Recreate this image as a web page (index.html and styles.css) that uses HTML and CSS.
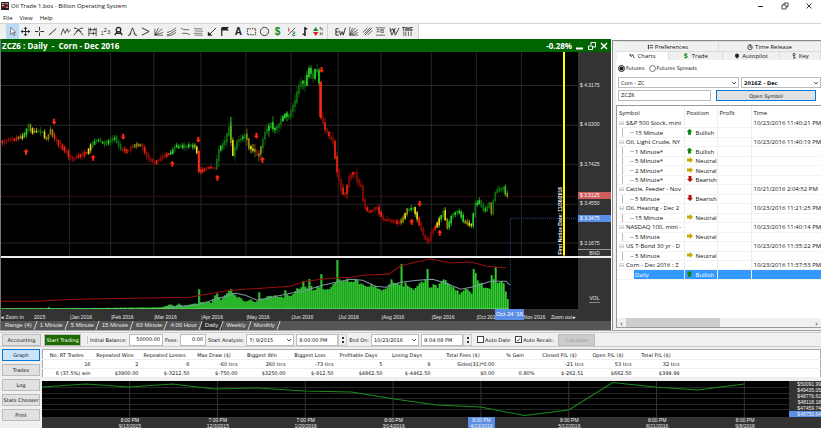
FILE: index.html
```html
<!DOCTYPE html>
<html lang="en">
<head>
    <meta charset="UTF-8">
    <meta name="viewport" content="width=device-width, initial-scale=1.0">
    <title>Oil Trade 1.bos - Billion Operating System</title>
    <link rel="stylesheet" href="styles.css">
</head>
<body>
    <header class="titlebar">
        <svg class="app-icon" viewBox="0 0 9 9"><rect width="9" height="9" rx="1" fill="#2a1414"/><path d="M1 2h3M1 4h2M5 2h3M6 6h2" stroke="#eee"/><path d="M1 7l3-3 1 2 3-3" stroke="#e33" fill="none"/></svg>
        <span class="title">Oil Trade 1.bos - Billion Operating System</span>
        <div class="window-buttons">
            <button aria-label="Minimize"><svg viewBox="0 0 8 8"><path d="M1 4.500h5"/></svg></button>
            <button aria-label="Restore"><svg viewBox="0 0 8 8"><path d="M1 3h4v4H1zM3 3V1h4v4H5" stroke-width=".8"/></svg></button>
            <button aria-label="Close"><svg viewBox="0 0 8 8"><path d="M1.500 1.500l5 5M6.500 1.500l-5 5" stroke-width=".9"/></svg></button>
        </div>
    </header>

    <nav class="menubar">
        <button>File</button>
        <button>View</button>
        <button>Help</button>
    </nav>

    <div class="toolbar">
        <div class="tools tools-draw">
            <button class="active" aria-label="Select"><svg viewBox="0 0 12 12"><path d="M4 1.500v8l2-2 1.500 3 1-.5-1.500-3h2.500z" fill="#fff" stroke="#555" stroke-width=".8"/></svg></button>
            <button aria-label="Move"><svg viewBox="0 0 12 12"><path d="M6 2v8M2 6h8"/><path d="M6 .8l2 2.200H4zM6 11.200l2-2.200H4zM.8 6l2.200-2v4zM11.200 6L9 4v4z" fill="#222" stroke="none"/></svg></button>
            <button aria-label="Crosshair"><svg viewBox="0 0 12 12"><path d="M6 1v4M6 7v4M1 6h4M7 6h4"/></svg></button>
            <button aria-label="Line"><svg viewBox="0 0 12 12"><path d="M2 10l8-7"/></svg></button>
            <button aria-label="Zigzag"><svg viewBox="0 0 12 12"><path d="M1 10l2.500-7 2 5 2.500-5 1 4 2.500-3" stroke-width=".8"/></svg></button>
            <button aria-label="Fork"><svg viewBox="0 0 12 12"><path d="M1 2.500h3l2 2 2-2h3M1 10l5-6 5 6M3 6l3-1 3 1" stroke-width=".9"/></svg></button>
            <button aria-label="Range"><svg viewBox="0 0 12 12"><path d="M2 2v9M10 2v9M2 4h8M2 8h8M4 2v4M7 6v4M8 2v3" stroke-width=".8"/></svg></button>
            <button aria-label="Count"><svg viewBox="0 0 12 12"><text x="1" y="10" font-size="5">1</text><text x="4" y="7" font-size="6">2</text><text x="8" y="9" font-size="6">3</text></svg></button>
            <button aria-label="Compass"><svg viewBox="0 0 12 12"><circle cx="6" cy="4" r="2.500" stroke-width="1.300"/><path d="M4.500 6L2 10M7.500 6L10 10M3 8h6" stroke-width="1.400"/></svg></button>
            <button aria-label="Peak"><svg viewBox="0 0 12 12"><path d="M1 10h2l1-3 2-5 2 5 1 3h2M4 7v2M8 7v2" stroke-width=".9"/></svg></button>
            <button aria-label="Angle"><svg viewBox="0 0 12 12"><path d="M2 2l8 4-8 4"/></svg></button>
            <button aria-label="Fan"><svg viewBox="0 0 12 12"><path d="M2 10V3M2 10l4-8M2 10l8-7M2 10l9-3M2 10h9" stroke-width=".7"/></svg></button>
            <button aria-label="Channel"><svg viewBox="0 0 12 12"><path d="M1 7l4-1 6-4M1 9.500l4-1 6-4M1 11l5-1 5-3" stroke-width=".7"/></svg></button>
            <button aria-label="Two levels"><svg viewBox="0 0 12 12"><path d="M1 3h2l1 1h6M2 8h6l1 1h2" stroke-width=".7"/></svg></button>
            <button aria-label="Three levels"><svg viewBox="0 0 12 12"><path d="M1 3h9M2 5.500h9M1 8h9M2 10h9" stroke-width=".6"/></svg></button>
            <button aria-label="Arrow"><svg viewBox="0 0 12 12"><path d="M11 2L4 9"/><path d="M2 6v4.500h5z" fill="#222" stroke="none"/></svg></button>
            <button aria-label="Flag"><svg viewBox="0 0 12 12"><path d="M3 11V2" stroke-width="1.300"/><path d="M3 1h8L9 3 11 5H3z" fill="#222" stroke="none"/></svg></button>
            <button aria-label="Text"><svg viewBox="0 0 12 12"><text x="2" y="10" font-size="11" font-weight="bold">A</text></svg></button>
            <button aria-label="Rectangle"><svg viewBox="0 0 12 12"><path d="M1.500 3h9v6.500h-9z" stroke-dasharray="1.500 1"/></svg></button>
            <button aria-label="Ellipse"><svg viewBox="0 0 12 12"><circle cx="6" cy="6" r="4.500" stroke-width=".9"/></svg></button>
            <button aria-label="Buy"><svg viewBox="0 0 12 12"><text class="green" x="3" y="10" font-size="11" font-weight="bold">$</text></svg></button>
            <button aria-label="Ratio"><svg viewBox="0 0 12 12"><path d="M2 10l8-8" stroke="#555"/><path d="M3 2v4" stroke="#c22"/><path d="M7 6.500h2.500v2H7.500v2H10" stroke="#283"/></svg></button>
            <button aria-label="Bar"><svg viewBox="0 0 12 12"><path d="M6.500 1v10M6 3h3M4 9h3" stroke-width="1.700"/></svg></button>
            <button aria-label="Signals"><svg viewBox="0 0 12 12"><path d="M1 5.500h6L4 1z" fill="#1a8a2a" stroke="none"/><path d="M1 6.500h6L4 11z" fill="#d22" stroke="none"/><path d="M9 1v3M9 7v3M11 2v3M11 7v3" stroke="#555"/></svg></button>
        </div>
        <div class="tools tools-study">
            <button aria-label="Elliott wave"><svg viewBox="0 0 12 12"><path d="M4 3H1v7h3M1 6.500h3M5 5l1 5 2-4 1 4 2.500-8"/></svg></button>
            <button aria-label="Speed lines"><svg viewBox="0 0 12 12"><path d="M2 1v9h9M2 10l3-8M2 10l6-8M2 10l9-6M4 10l7-3" stroke-width=".7"/></svg></button>
            <button aria-label="Parallels"><svg viewBox="0 0 12 12"><path d="M1 7l5-5M3 8l6-6M3 10l8-8M6 10l5-5" stroke-width=".8"/></svg></button>
            <button aria-label="Fibonacci"><svg viewBox="0 0 12 12"><path d="M1 2h10M1 10h10" stroke-width=".7"/><text x="2" y="8" font-size="5">FIB</text></svg></button>
            <button aria-label="Waves"><svg viewBox="0 0 12 12"><path d="M1 2l2 8 4-8M4 3l3 7 4-8M1 6l3-3 3 4" stroke-width=".9"/></svg></button>
            <button aria-label="Time zones"><svg viewBox="0 0 12 12"><text x="0" y="5" font-size="5" font-weight="bold">TIME</text><path d="M2 6v5M4 6v5M7 6v5M10 6v5" stroke-width=".7"/></svg></button>
        </div>
    </div>

    <main class="workspace">
        <section class="chart">
            <div class="chart-header">
                <h1>ZCZ6 : Daily &nbsp;- &nbsp;Corn - Dec 2016</h1>
                <span class="change">-0.28%</span>
                <button aria-label="Minimize chart"><svg viewBox="0 0 8 8"><path d="M0 6.500h7" stroke-width="2"/></svg></button>
                <button aria-label="Restore chart"><svg viewBox="0 0 8 8"><path d="M.5 4h4v3.500h-4zM3 3V.5h4.500V5H5"/></svg></button>
                <button aria-label="Close chart"><svg viewBox="0 0 8 8"><path d="M1 1l6 6M7 1l-6 6" stroke-width="1.500"/></svg></button>
            </div>

            <div class="price-plot">
                <svg id="price" class="plot" viewBox="1 52 576 204" preserveAspectRatio="none"></svg>
                <span class="notice">First Notice Date: 11/30/2016</span>
            </div>
            <div class="price-axis">
                <ol>
                    <li>$ 4.3175</li>
                    <li>$ 4.0300</li>
                    <li>$ 3.7425</li>
                    <li>$ 3.4550</li>
                    <li>$ 3.1675</li>
                </ol>
                <span class="end">BND</span>
                <span class="tag tag-last">$ 3.5125</span>
                <span class="tag tag-cursor">$ 3.3475</span>
            </div>

            <div class="volume-plot">
                <svg id="volume" class="plot" viewBox="1 258 576 51" preserveAspectRatio="none"></svg>
            </div>
            <div class="volume-axis"><span>VOL</span></div>

            <div class="months">
                <button><b>◂</b> Zoom In</button>
                <span>2015</span>
                <span>|Jan 2016</span>
                <span>|Feb 2016</span>
                <span>|Mar 2016</span>
                <span>|Apr 2016</span>
                <span>|May 2016</span>
                <span>|Jun 2016</span>
                <span>|Jul 2016</span>
                <span>|Aug 2016</span>
                <span>|Sep 2016</span>
                <span>|Oct 2016</span>
                <span>Nov 2016</span>
                <button>Zoom out <b>▸</b></button>
                <span class="date-flag">Oct 24 '16</span>
            </div>

            <div class="frames">
                <button>Range (4)</button>
                <button>1 Minute</button>
                <button>5 Minute</button>
                <button>15 Minute</button>
                <button>60 Minute</button>
                <button>4:00 Hour</button>
                <button class="active">Daily</button>
                <button>Weekly</button>
                <button>Monthly</button>
            </div>
        </section>

        <aside class="panel">
            <div class="tabs tabs-top">
                <button><svg viewBox="0 0 8 8"><path d="M1 2h2M4 2h4M1 5h2M4 5h4M2 1v6"/></svg>Preferences</button>
                <button><svg viewBox="0 0 8 8"><circle cx="4" cy="4.500" r="3"/><path d="M4 2.500v2h2M3 .5h2"/></svg>Time Release</button>
            </div>
            <div class="tabs tabs-bottom">
                <button class="active"><svg viewBox="0 0 8 8"><path d="M1 1l2 4 2-3 2 5M1 4l2-2"/></svg>Charts</button>
                <button><b class="dollar">$</b>Trade</button>
                <button><svg viewBox="0 0 8 8"><path d="M2 2h4v3L4 7 2 5z" fill="#222"/><path d="M4 0v2"/></svg>Autopilot</button>
                <button><svg viewBox="0 0 8 8"><circle cx="4" cy="2" r="1.500"/><path d="M4 3v5M4 6h2"/></svg>Key</button>
            </div>

            <div class="radios">
                <label><input type="radio" name="kind" checked>Futures</label>
                <label><input type="radio" name="kind">Futures Spreads</label>
            </div>
            <div class="pickers">
                <select aria-label="Market"><option>Corn - ZC</option></select>
                <select class="bold" aria-label="Contract"><option>2016Z - Dec</option></select>
            </div>
            <div class="lookup">
                <input type="text" aria-label="Symbol" value="ZCZ6">
                <button>Open Symbol</button>
            </div>

            <div class="symbols">
                <table>
                    <thead>
                        <tr><th class="col-symbol">Symbol</th><th class="col-position">Position</th><th class="col-profit">Profit</th><th>Time</th></tr>
                    </thead>
                    <tbody>
                        <tr class="group"><td>S&amp;P 500 Stock, mini</td><td></td><td></td><td>10/23/2016 11:40:21 PM</td></tr>
                        <tr><td>15 Minute</td><td class="bullish">Bullish</td><td></td><td></td></tr>
                        <tr class="group"><td>Oil, Light Crude, NY</td><td></td><td></td><td>10/23/2016 11:40:19 PM</td></tr>
                        <tr><td>1 Minute*</td><td class="bullish">Bullish</td><td></td><td></td></tr>
                        <tr><td>5 Minute*</td><td class="neutral">Neutral</td><td></td><td></td></tr>
                        <tr><td>2 Minute*</td><td class="neutral">Neutral</td><td></td><td></td></tr>
                        <tr><td>5 Minute*</td><td class="bearish">Bearish</td><td></td><td></td></tr>
                        <tr class="group"><td>Cattle, Feeder - Nov</td><td></td><td></td><td>10/21/2016 2:04:52 PM</td></tr>
                        <tr><td>5 Minute</td><td class="bearish">Bearish</td><td></td><td></td></tr>
                        <tr class="group"><td>Oil, Heating - Dec 2</td><td></td><td></td><td>10/23/2016 11:21:25 PM</td></tr>
                        <tr><td>15 Minute</td><td class="neutral">Neutral</td><td></td><td></td></tr>
                        <tr class="group"><td>NASDAQ 100, mini -</td><td></td><td></td><td>10/23/2016 11:40:14 PM</td></tr>
                        <tr><td>5 Minute</td><td class="neutral">Neutral</td><td></td><td></td></tr>
                        <tr class="group"><td>US T-Bond 30 yr - D</td><td></td><td></td><td>10/23/2016 11:35:22 PM</td></tr>
                        <tr><td>5 Minute</td><td class="neutral">Neutral</td><td></td><td></td></tr>
                        <tr class="group"><td>Corn - Dec 2016 : Z</td><td></td><td></td><td>10/23/2016 11:37:53 PM</td></tr>
                        <tr class="selected"><td>Daily</td><td class="bullish">Bullish</td><td></td><td></td></tr>
                    </tbody>
                </table>
                <div class="scrollbar">
                    <button aria-label="Scroll left">‹</button>
                    <div class="thumb"></div>
                    <button aria-label="Scroll right">›</button>
                </div>
            </div>
        </aside>
    </main>

    <section class="account">
        <form class="controls">
            <button type="button" class="btn accounting">Accounting</button>
            <button type="button" class="btn start">Start Trading</button>
            <label class="first" for="balance">Initial Balance:</label>
            <input type="text" id="balance" class="num balance" value="50000.00">
            <label for="fees">Fees:</label>
            <input type="text" id="fees" class="num fees" value="0.00">
            <label for="start-date">Start Analysis:</label>
            <select id="start-date"><option>7/ 9/2015</option></select>
            <span class="spinner"><input type="text" aria-label="Start time" value="8:00:00 PM"><i></i></span>
            <label for="end-date">End On:</label>
            <select id="end-date"><option>10/23/2016</option></select>
            <span class="spinner"><input type="text" aria-label="End time" value="9:04:08 PM"><i></i></span>
            <label class="check"><input type="checkbox">Auto Date</label>
            <label class="check"><input type="checkbox" checked>Auto Recalc.</label>
            <button type="button" class="btn calculate" disabled>Calculate</button>
        </form>

        <div class="results">
            <nav class="side">
                <button class="btn active">Graph</button>
                <button class="btn">Trades</button>
                <button class="btn">Log</button>
                <button class="btn">Stats Chooser</button>
                <button class="btn">Print</button>
            </nav>
            <div class="report">
                <table class="stats">
                    <thead>
                        <tr><th class="mid">No. RT Trades</th><th>Repeated Wins</th><th class="losses">Repeated Losses</th><th>Max Draw ($)</th><th>Biggest Win</th><th>Biggest Loss</th><th class="mid">Profitable Days</th><th>Losing Days</th><th class="fees-total">Total Fees ($)</th><th class="narrow">% Gain</th><th class="mid">Closed P/L ($)</th><th>Open P/L ($)</th><th>Total P/L ($)</th><th class="rest"></th></tr>
                    </thead>
                    <tbody>
                        <tr><td>16</td><td>2</td><td>6</td><td>-60 tics</td><td>260 tics</td><td>-73 tics</td><td>5</td><td>9</td><td>Sides(31)*0.00</td><td></td><td>-21 tics</td><td>53 tics</td><td>32 tics</td><td></td></tr>
                        <tr><td>6 (37.5%) win</td><td>$3900.00</td><td>$-3212.50</td><td>$-750.00</td><td>$3250.00</td><td>$-912.50</td><td>$4862.50</td><td>$-4462.50</td><td>$0.00</td><td>0.80%</td><td>$-262.51</td><td>$662.50</td><td>$399.99</td><td></td></tr>
                    </tbody>
                </table>
                <div class="equity">
                    <svg id="equity" class="plot" viewBox="43 381 746 36" preserveAspectRatio="none"></svg>
                    <ol class="equity-axis">
                        <li>$50091.99</li>
                        <li>$49435.05</li>
                        <li>$48776.62</li>
                        <li>$48118.18</li>
                        <li>$47459.74</li>
                        <li class="current">$46750.64</li>
                    </ol>
                    <ol class="dates">
                        <li>8:00 PM<br>9/13/2015</li>
                        <li>7:00 PM<br>12/3/2015</li>
                        <li>7:00 PM<br>1/20/2016</li>
                        <li>8:00 PM<br>3/14/2016</li>
                        <li class="current"><span>8:00 PM<br>4/13/2016</span></li>
                        <li>8:00 PM<br>5/12/2016</li>
                        <li>8:00 PM<br>8/21/2016</li>
                        <li>8:00 PM<br>9/8/2016</li>
                    </ol>
                </div>
            </div>
        </div>
    </section>

    <script src="charts.js"></script>
</body>
</html>
```

FILE: styles.css
```css
* {
    box-sizing: border-box;
}
body {
    margin: 0;
    height: 100vh;
    display: flex;
    flex-direction: column;
    overflow: hidden;
    background: #fff;
    color: #111;
    font-family: "Open Sans", "Noto Sans", sans-serif;
    font-size: 6px;
    line-height: 8px;
}
button, input, select {
    font: inherit;
    color: inherit;
    margin: 0;
    padding: 0;
    border: 0;
    background: none;
    min-width: 0;
}
ol {
    list-style: none;
    margin: 0;
    padding: 0;
}
svg {
    fill: none;
    stroke: #222;
}
svg text {
    fill: #222;
    stroke: none;
    font-family: "Liberation Sans", sans-serif;
}
svg text.green {
    fill: #128a12;
}

/* Window */
.titlebar {
    display: flex;
    align-items: center;
    height: 12px;
    padding: 0 8px 0 1px;
    gap: 2px;
}
.app-icon {
    width: 8px;
    height: 8px;
}
.title {
    flex: 1;
}
.window-buttons {
    display: flex;
    gap: 16px;
}
.window-buttons button {
    display: flex;
}
.window-buttons svg {
    width: 8px;
    height: 8px;
}
.menubar {
    display: flex;
    gap: 7px;
    height: 11px;
    padding-left: 3px;
}

/* Toolbar */
.toolbar {
    display: flex;
    height: 16px;
    border-top: 1px solid #d4d4d4;
}
.tools {
    display: grid;
    grid-auto-flow: column;
    grid-auto-columns: 1fr;
    background: #f0f0f0;
    border-right: 1px solid #d4d4d4;
}
.tools-draw {
    width: 40%;
    padding-left: 6px;
    padding-right: 3px;
}
.tools-study {
    width: 11%;
    padding-left: 5px;
    padding-right: 3px;
}
.tools button {
    display: flex;
    align-items: center;
    justify-content: center;
    padding: 1px 0 2px;
}
.tools svg {
    width: 11px;
    height: 11px;
}
.tools .active {
    background: #b9dbf6;
}

/* Chart */
.workspace {
    flex: 1;
    min-height: 0;
    display: grid;
    grid-template-columns: 1fr 209px;
    border-bottom: 1px solid #a0a0a0;
}
.chart {
    display: grid;
    grid-template-columns: 1fr 33px;
    grid-template-rows: 13px 4fr 1fr 12px 9px;
    min-height: 0;
    border-left: 1px solid #777;
    border-right: 1px solid #fff;
    color: #e6e6e6;
    background: #333;
    font-family: "Liberation Sans", sans-serif;
    font-size: 5px;
}
.chart-header {
    grid-column: 1 / -1;
    display: flex;
    align-items: center;
    gap: 4px;
    padding: 0 3px 0 1px;
    background: #006400;
    color: #fff;
    font-family: "Open Sans", sans-serif;
    font-size: 8px;
    font-weight: bold;
}
.chart-header h1 {
    flex: 1;
    margin: 0;
    font-size: inherit;
}
.chart-header button {
    display: flex;
}
.chart-header svg {
    width: 8px;
    height: 8px;
    stroke: #fff;
}
.plot {
    display: block;
    width: 100%;
    height: 100%;
    background: #000;
}
.price-plot {
    position: relative;
    min-height: 0;
    border-bottom: 2px solid #eee;
}
.notice {
    position: absolute;
    right: 14px;
    bottom: 1px;
    writing-mode: vertical-rl;
    transform: rotate(180deg);
    color: #fff;
    font-weight: bold;
    line-height: 8px;
}
.price-axis {
    position: relative;
    display: flex;
    flex-direction: column;
    padding-top: 29px;
    border-bottom: 2px solid #eee;
}
.price-axis ol {
    flex: 1;
    display: flex;
    flex-direction: column;
    justify-content: space-between;
    padding-left: 2px;
}
.end {
    margin-top: 2px;
    border-top: 1px solid #999;
    line-height: 6px;
    text-align: center;
}
.tag {
    position: absolute;
    left: 0;
    right: 0;
    padding-left: 2px;
    line-height: 7px;
    color: #fff;
}
.tag-last {
    top: 69%;
    background: #cd5c5c;
}
.tag-cursor {
    top: 80%;
    background: #5b8ee6;
}
.volume-plot {
    min-height: 0;
}
.volume-axis {
    display: flex;
    align-items: flex-end;
    justify-content: center;
    padding-bottom: 6px;
}
.volume-axis span {
    border-bottom: 1px solid #888;
}
.months {
    grid-column: 1 / -1;
    position: relative;
    display: grid;
    grid-template-columns: 33fr 36fr 41fr 43fr 47fr 45fr 45fr 47fr 43fr 50fr 45fr 47fr 27fr 60fr;
    align-items: end;
    white-space: nowrap;
    line-height: 7px;
}
.months button {
    text-align: left;
}
.date-flag {
    position: absolute;
    left: 81%;
    top: 0;
    width: 29px;
    text-align: center;
    background: #5b8ee6;
    color: #fff;
    font-size: 6px;
    line-height: 11px;
}
.frames {
    grid-column: 1 / -1;
    display: flex;
    background: #555;
    font-size: 6px;
}
.frames button {
    display: flex;
    padding-left: 4px;
}
.frames button::after {
    content: "";
    margin-left: 3px;
    border-right: 1px solid #ccc;
    height: 9px;
    transform: skewX(-20deg);
}
.frames .active {
    background: #333;
}

/* Right panel */
.panel {
    display: flex;
    flex-direction: column;
    min-width: 0;
    margin-top: 1px;
    padding: 0 0 2px 3px;
    border-left: 1px solid #888;
    border-top: 1px solid #888;
    background: #f0f0f0;
}
.tabs {
    display: grid;
    margin-left: 1px;
}
.tabs-top {
    grid-template-columns: 1fr 1fr;
    height: 10px;
}
.tabs-bottom {
    grid-template-columns: 53fr 55fr 57fr 42fr;
    height: 9px;
}
.tabs button {
    display: flex;
    align-items: center;
    justify-content: center;
    gap: 2px;
    border: 1px solid #dcdcdc;
    border-width: 1px 1px 0 0;
}
.tabs svg {
    width: 6px;
    height: 6px;
}
.tabs .active {
    background: #fff;
}
.dollar {
    margin-right: 2px;
    color: #128a12;
    font-size: 7px;
}
.radios, .pickers, .lookup, .account {
    font-family: "DejaVu Sans", sans-serif;
    font-size: 5px;
}
.radios, .pickers, .lookup {
    display: flex;
    background: #fff;
    padding-left: 2px;
}
.radios {
    gap: 4px;
    padding-top: 4px;
    height: 17px;
}
.radios label, .check {
    display: flex;
    align-items: center;
    gap: 1px;
}
.radios label {
    height: 8px;
}
.radios input {
    width: 7px;
    height: 7px;
    accent-color: #222;
}
.pickers {
    gap: 2px;
    padding-bottom: 2px;
}
.pickers select {
    flex: 8;
    height: 11px;
}
.pickers .bold {
    flex: 5;
    font-weight: bold;
}
.lookup {
    gap: 5px;
    padding-right: 5px;
    padding-bottom: 4px;
}
.lookup input {
    flex: 8;
    height: 11px;
    padding: 0 2px 1px;
    border: 1px solid #bbb;
}
.lookup button {
    flex: 9;
    border: 1px solid #0078d7;
    background: #e1e1e1;
}
select {
    appearance: none;
    padding: 0 8px 0 2px;
    border: 1px solid #bbb;
    background: #fff url("data:image/svg+xml,%3Csvg xmlns='http://www.w3.org/2000/svg' viewBox='0 0 6 6'%3E%3Cpath d='M1 2l2 2 2-2' fill='none' stroke='%23555'/%3E%3C/svg%3E") no-repeat right 1px center / 6px 6px;
}
.symbols {
    flex: 1;
    min-height: 0;
    display: flex;
    flex-direction: column;
    justify-content: space-between;
    border: 1px solid #999;
    border-right: 0;
    background: #fff;
}
.symbols table {
    width: 100%;
    height: 174px;
    table-layout: fixed;
    border-collapse: collapse;
}
.symbols th, .symbols td {
    padding: 0 0 0 2px;
    overflow: hidden;
    white-space: nowrap;
    text-align: left;
    font-weight: normal;
    border-right: 1px solid #eee;
}
.symbols th:last-child, .symbols td:last-child {
    border-right: 0;
}
.symbols td {
    border-bottom: 1px solid #f3f3f3;
    line-height: 8px;
}
.symbols th {
    height: 13px;
}
.col-symbol {
    width: 67px;
}
.col-position {
    width: 33px;
}
.col-profit {
    width: 34px;
}
.symbols td:first-child {
    padding-left: 18px;
    background: linear-gradient(#bbb, #bbb) 5px 0 / 1px 100% no-repeat, linear-gradient(#bbb, #bbb) 13px 4px / 4px 1px no-repeat;
}
.symbols .group td:first-child {
    padding-left: 2px;
    background: none;
}
.group td:first-child::before {
    content: "⊟";
    margin-right: 2px;
    color: #999;
}
.symbols .selected td {
    background-color: #3399ff;
    color: #fff;
}
.symbols .selected td:first-child {
    background: linear-gradient(#fff, #fff) 0 0 / 17px 100% no-repeat, #3399ff;
}
.bullish::before, .neutral::before, .bearish::before {
    content: "";
    display: inline-block;
    width: 6px;
    height: 6px;
    margin-right: 3px;
    background: #128a12;
    clip-path: polygon(50% 0, 100% 50%, 75% 50%, 75% 100%, 25% 100%, 25% 50%, 0 50%);
}
.neutral::before {
    background: #c8a800;
    transform: rotate(90deg);
}
.bearish::before {
    background: #b01010;
    transform: rotate(180deg);
}
.scrollbar {
    display: flex;
    height: 9px;
    background: #f0f0f0;
}
.scrollbar button {
    width: 9px;
    font-size: 8px;
}
.thumb {
    width: 94px;
    margin-right: auto;
    background: #cdcdcd;
}

/* Account bar */
.account {
    border-top: 1px solid #f0f0f0;
    background: #f0f0f0;
}
.controls {
    display: flex;
    align-items: center;
    gap: 2px;
    height: 15px;
    padding-left: 2px;
    border-top: 1px solid #ccc;
    border-bottom: 1px solid #ccc;
}
.controls input, .controls select {
    height: 12px;
}
.controls select {
    width: 48px;
}
.controls input {
    border: 1px solid #bbb;
    background: #fff;
}
.btn {
    height: 12px;
    border: 1px solid #bbb;
    background: #e1e1e1;
    text-align: center;
    white-space: nowrap;
}
.accounting {
    width: 39px;
    margin-right: 1px;
}
.start {
    width: 37px;
    background: #1f6a00;
    color: #fff;
}
.first {
    margin-left: 4px;
    padding-left: 2px;
    border-left: 1px solid #ccc;
}
.num {
    padding: 0 2px 2px;
    text-align: right;
}
.balance {
    width: 34px;
}
.fees {
    width: 26px;
}
.spinner {
    display: flex;
    background: #fff;
}
.spinner input {
    width: 42px;
    padding-left: 2px;
}
.spinner i {
    width: 9px;
    border: 1px solid #ccc;
    background: linear-gradient(#333, #333) 3px 2px / 2px 2px no-repeat, linear-gradient(#333, #333) 3px 6px / 2px 2px no-repeat, #eee;
}
.controls .check input {
    appearance: none;
    width: 7px;
    height: 7px;
    border: 1px solid #444;
}
.check {
    margin-left: 3px;
}
.check input:checked::before {
    content: "✓";
    display: block;
    font-size: 6px;
    line-height: 5px;
}
.calculate {
    width: 37px;
    margin-left: 2px;
    background: #ccc;
    color: #999;
}
.results {
    display: flex;
    gap: 2px;
    height: 81px;
    padding: 2px 0 0 2px;
}
.side {
    display: flex;
    flex-direction: column;
    gap: 3px;
    width: 38px;
}
.side .active {
    border-color: #0078d7;
    background: #cce4f7;
}
.report {
    flex: 1;
    min-width: 0;
    display: flex;
    flex-direction: column;
    gap: 3px;
}
.stats {
    width: 100%;
    table-layout: fixed;
    border-collapse: collapse;
    background: #fff;
    border: 1px solid #aaa;
}
.stats th, .stats td {
    width: 48px;
    padding: 0 1px 0 0;
    height: 9px;
    text-align: right;
    white-space: nowrap;
    font-weight: normal;
    border-bottom: 1px solid #eee;
}
.stats th {
    height: 10px;
    text-align: center;
}
.stats .mid {
    width: 49px;
}
.stats .losses {
    width: 51px;
}
.stats .fees-total {
    width: 64px;
}
.stats .narrow {
    width: 40px;
}
.stats .rest {
    width: auto;
}
.equity {
    flex: 1;
    display: grid;
    grid-template-columns: 1fr 32px;
    grid-template-rows: 36px 1fr;
    background: #333;
    color: #eee;
    font-family: "Liberation Sans", sans-serif;
    font-size: 5px;
}
.equity-axis {
    display: flex;
    flex-direction: column;
    justify-content: flex-end;
    line-height: 6px;
    text-align: right;
}
.equity-axis .current, .dates .current span {
    background: #5b8ee6;
}
.dates {
    display: grid;
    grid-template-columns: repeat(8, 1fr);
    padding-left: 44px;
    line-height: 6px;
    text-align: center;
}
.dates .current span {
    display: inline-block;
    padding: 0 2px;
}
```

FILE: charts.js
```js
const SVG = 'http://www.w3.org/2000/svg';

function add(parent, tag, attrs) {
    const el = document.createElementNS(SVG, tag);
    for (const key in attrs) el.setAttribute(key, attrs[key]);
    parent.appendChild(el);
    return el;
}

// small seeded generator, so that wicks are the same on every load
let seed = 7;
function rand() {
    seed = (seed * 16807) % 2147483647;
    return seed / 2147483647;
}

function valueAt(points, x) {
    for (let i = 1; i < points.length; i++) {
        if (x <= points[i][0]) {
            const [x0, y0] = points[i - 1];
            const [x1, y1] = points[i];
            return y0 + (y1 - y0) * (x - x0) / (x1 - x0);
        }
    }
    return points[points.length - 1][1];
}

const months = [69.5, 110.5, 153.5, 200.5, 245.5, 290.5, 337.5, 380.5, 430.5, 475.5, 520.5];

// x, y, trend colour up to the next point (r = down, g = up, y = flat)
const prices = [
    [1, 143, 'r'], [10, 140, 'r'], [18, 139, 'y'], [24, 136, 'g'], [29, 126, 'y'], [33, 133, 'y'], [38, 131, 'g'],
    [43, 133, 'y'], [46, 140, 'y'], [51, 131, 'y'], [54, 138, 'r'], [60, 145, 'r'], [68, 154, 'r'], [72, 160, 'r'],
    [82, 155, 'r'], [88, 152, 'y'], [92, 144, 'g'], [98, 140, 'g'], [105, 144, 'g'], [115, 138, 'g'], [121, 149, 'r'],
    [128, 152, 'r'], [133, 146, 'y'], [141, 145, 'r'], [147, 156, 'r'], [154, 164, 'r'], [162, 157, 'r'], [170, 154, 'g'],
    [175, 147, 'g'], [194, 146, 'y'], [197, 152, 'r'], [199, 172, 'r'], [208, 168, 'r'], [216, 168, 'g'], [218, 152, 'g'],
    [225, 142, 'g'], [229, 128, 'y'], [233, 155, 'g'], [237, 142, 'g'], [246, 135, 'y'], [249, 148, 'y'], [255, 152, 'r'],
    [258, 158, 'y'], [261, 148, 'g'], [264, 135, 'g'], [271, 124, 'g'], [274, 131, 'g'], [280, 122, 'g'], [285, 114, 'g'],
    [288, 118, 'g'], [295, 102, 'g'], [298, 88, 'g'], [302, 80, 'g'], [305, 85, 'g'], [309, 68, 'g'], [313, 78, 'g'],
    [316, 65, 'g'], [319, 82, 'r'], [320, 115, 'r'], [324, 127, 'r'], [330, 138, 'r'], [333, 142, 'r'], [336, 166, 'r'],
    [340, 186, 'r'], [344, 198, 'r'], [349, 178, 'r'], [354, 171, 'r'], [358, 184, 'r'], [361, 186, 'r'], [364, 208, 'r'],
    [370, 212, 'r'], [376, 207, 'r'], [383, 220, 'r'], [400, 223, 'y'], [407, 210, 'g'], [413, 208, 'y'], [417, 218, 'r'],
    [423, 236, 'r'], [428, 243, 'r'], [432, 230, 'r'], [436, 227, 'y'], [439, 219, 'g'], [443, 212, 'y'], [447, 227, 'g'],
    [452, 215, 'g'], [459, 212, 'g'], [463, 222, 'y'], [471, 226, 'g'], [475, 205, 'g'], [479, 202, 'g'], [484, 212, 'g'],
    [489, 204, 'y'], [491, 214, 'g'], [494, 194, 'g'], [498, 190, 'g'], [503, 188, 'g'], [506, 196, 'y'], [508, 196, 'y']
];

const colours = {
    r: ['#f0250e', '#850c08'],
    g: ['#2ad42a', '#0f700f'],
    y: ['#e6de18', '#8f8810']
};

function drawPrice() {
    const svg = document.getElementById('price');
    months.forEach(x => add(svg, 'path', { d: `M${x} 52V256`, stroke: '#262626' }));
    [85.5, 125.5, 164.5, 204.5, 243.5].forEach(y => add(svg, 'path', { d: `M1 ${y}H577`, stroke: '#262626' }));
    add(svg, 'path', { d: 'M1 196.5H577', stroke: '#5a1a1a', 'stroke-dasharray': '1 1' });
    add(svg, 'path', { d: 'M509.5 256V218.5H577', stroke: '#2c4a80', 'stroke-dasharray': '1 1' });

    for (let x = 2; x < 508; x += 2) {
        const from = valueAt(prices, x - 1);
        const to = valueAt(prices, x + 1);
        let trend = 'r';
        prices.forEach(p => { if (p[0] <= x) trend = p[2]; });
        const colour = colours[trend][rand() < 0.42 ? 0 : 1];
        const wild = (x > 215 && x < 365) ? 6 : 3;
        const top = Math.min(from, to) - rand() * 2;
        const bottom = Math.max(from, to) + rand() * 2;
        add(svg, 'path', { d: `M${x + 0.5} ${top - rand() * wild}V${bottom + rand() * wild}`, stroke: colour, 'stroke-width': 0.7 });
        add(svg, 'rect', { x: x - 0.4, y: top, width: 1.6, height: Math.max(bottom - top, 1), fill: colour, stroke: 'none' });
    }
    add(svg, 'path', { d: 'M230.5 117V140', stroke: '#2ad42a' });
    add(svg, 'path', { d: 'M319.700 83V117', stroke: '#ff2a10', 'stroke-width': 2 });
    add(svg, 'path', { d: 'M198.500 151V172', stroke: '#ff2a10', 'stroke-width': 2 });

    // trade markers
    const down = [[54, 122], [123, 137], [198, 140], [256, 136], [321, 70], [419, 204]];
    const up = [[26, 152], [93, 158], [172, 164], [217, 178], [262, 160], [411, 222], [439, 233]];
    down.forEach(([x, y]) => add(svg, 'path', { d: `M${x} ${y + 3}l-2.500-3h1.500v-3h2v3h1.500z`, fill: '#ff2a10', stroke: 'none' }));
    up.forEach(([x, y]) => add(svg, 'path', { d: `M${x} ${y - 3}l-2.500 3h1.500v3h2v-3h1.500z`, fill: '#ff2a10', stroke: 'none' }));

    add(svg, 'path', { d: 'M563 52V256', stroke: '#ffff00', 'stroke-width': 2 });
}

const volumes = [
    [1, 1], [45, 1], [48, 2], [52, 1], [160, 2], [170, 5], [174, 3], [178, 6], [182, 3], [190, 5], [196, 6], [202, 7],
    [210, 7], [216, 16], [220, 9], [228, 17], [231, 18], [235, 13], [240, 12], [244, 7], [250, 9], [254, 7], [262, 11],
    [272, 13], [282, 12], [290, 15], [297, 21], [303, 21], [308, 24], [312, 20], [318, 22], [328, 21], [338, 29],
    [354, 30], [360, 25], [370, 24], [377, 19], [385, 22], [391, 29], [397, 24], [405, 25], [413, 20], [420, 26],
    [425, 34], [428, 23], [437, 23], [443, 28], [450, 22], [458, 16], [464, 21], [470, 17], [476, 30], [481, 24],
    [487, 19], [492, 32], [496, 24], [503, 27], [505, 11], [508, 9]
];
const spikes = { 198: 20, 230: 20, 258: 17, 284: 19, 302: 28, 308: 30, 320: 35, 336: 49, 400: 45, 426: 40, 472: 40, 474: 36, 490: 34, 494: 42 };

function drawVolume() {
    const svg = document.getElementById('volume');
    for (let x = 2; x < 507; x += 2) {
        let h = valueAt(volumes, x);
        h = spikes[x] || h + (rand() - 0.5) * h * 0.2;
        add(svg, 'rect', { x, y: 309 - h, width: 2, height: h, fill: '#22a022', stroke: 'none' });
        add(svg, 'rect', { x, y: 309 - h, width: 1, height: h, fill: '#38d838', stroke: 'none' });
    }
    add(svg, 'path', { d: 'M1 308.5H508', stroke: '#7ae87a' });
    add(svg, 'polyline', {
        points: '1,301 35,301 75,299 190,297 200,295 230,290 290,286 305,281 330,278 350,277 362,275 388,274 400,266 415,262 430,259 450,263 470,262 485,266 505,268',
        stroke: '#9a1010'
    });
    add(svg, 'polyline', {
        points: '165,307 195,305 225,296 235,293 245,295 257,300 290,293 302,291 322,285 340,281 350,279 362,280 375,286 385,287 400,282 417,280 432,279 445,283 460,289 475,286 490,281 505,281 509,285',
        stroke: '#7f97a8'
    });
    add(svg, 'path', { d: 'M509.5 258V309', stroke: '#2c4a80', 'stroke-dasharray': '1 1' });
}

function drawEquity() {
    const svg = document.getElementById('equity');
    [387.5, 393.5, 398.5, 404.5, 409.5].forEach(y => add(svg, 'path', { d: `M43 ${y}H789`, stroke: '#262626' }));
    for (let i = 0; i < 8; i++) {
        add(svg, 'path', { d: `M${130.5 + i * 87.7} 381V417`, stroke: '#333' });
    }
    add(svg, 'polyline', {
        points: '43,387 87,384 130,387 173,384 215,389 258,388 305,391 352,392 395,399 437,405 481,407 525,415.5 569,410 613,382.5 655,387 698,390 744,384',
        stroke: '#1c8c1c'
    });
}

drawPrice();
drawVolume();
drawEquity();
```
